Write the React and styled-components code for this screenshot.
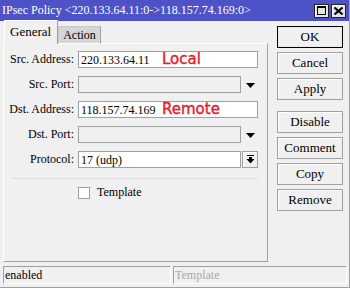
import styled, { createGlobalStyle } from "styled-components";

const GlobalStyle = createGlobalStyle`
	html, body {
		margin: 0;
		padding: 0;
		background: #f0f0f0;
	}
	* {
		box-sizing: border-box;
	}
`;

const rows = [
	{ label: "Src. Address:", value: "220.133.64.11", note: "Local", kind: "text" },
	{ label: "Src. Port:", kind: "drop" },
	{ label: "Dst. Address:", value: "118.157.74.169", note: "Remote", kind: "text" },
	{ label: "Dst. Port:", kind: "drop" },
	{ label: "Protocol:", value: "17 (udp)", kind: "select" },
];

const buttons = ["OK", "Cancel", "Apply", "Disable", "Comment", "Copy", "Remove"];

const App = () => {
	return (
		<>
			<GlobalStyle />
			<Window>
				<TitleBar>
					<Title>IPsec Policy &lt;220.133.64.11:0-&gt;118.157.74.169:0&gt;</Title>
					<TitleButtons>
						<TitleButton>
							<svg width="9" height="9" viewBox="0 0 9 9">
								<rect x="0.5" y="0.5" width="8" height="8" fill="none" stroke="#000" />
								<rect x="0" y="0" width="9" height="2" fill="#000" />
							</svg>
						</TitleButton>
						<TitleButton>
							<svg width="9" height="8" viewBox="0 0 9 8">
								<path d="M0.5 0.5 L8.5 7.5 M8.5 0.5 L0.5 7.5" stroke="#000" strokeWidth="2" />
							</svg>
						</TitleButton>
					</TitleButtons>
				</TitleBar>

				<Body>
					<Main>
						<Tabs>
							<Tab $active>General</Tab>
							<Tab>Action</Tab>
						</Tabs>
						<Panel>
							<Form>
								{rows.map((row) => (
									<Row key={row.label}>
										<Label>{row.label}</Label>
										<FieldWrap>
											<Field $disabled={row.kind === "drop"} $short={row.kind !== "text"}>
												{row.value}
												{row.note && <Note>{row.note}</Note>}
											</Field>
											{row.kind === "drop" && (
												<DropArrow>
													<svg width="9" height="5" viewBox="0 0 9 5">
														<path d="M0 0 H9 L4.5 5 Z" fill="#000" />
													</svg>
												</DropArrow>
											)}
											{row.kind === "select" && (
												<SelectButton>
													<svg width="9" height="9" viewBox="0 0 9 9">
														<rect x="1" y="0" width="7" height="1" fill="#000" />
														<rect x="3" y="2" width="3" height="3" fill="#000" />
														<path d="M0.5 4 H8.5 L4.5 8.5 Z" fill="#000" />
													</svg>
												</SelectButton>
											)}
										</FieldWrap>
									</Row>
								))}
							</Form>
							<Separator />
							<CheckRow>
								<Checkbox />
								<span>Template</span>
							</CheckRow>
						</Panel>
					</Main>

					<ButtonColumn>
						{buttons.map((b, i) => (
							<Button key={b} $primary={i === 0} $spaced={i === 3}>
								{b}
							</Button>
						))}
					</ButtonColumn>
				</Body>

				<StatusBar>
					<StatusCell $width={168}>enabled</StatusCell>
					<StatusCell $muted>Template</StatusCell>
				</StatusBar>
			</Window>
		</>
	);
};

const Window = styled.div`
	width: 350px;
	height: 288px;
	display: flex;
	flex-direction: column;
	background: #f0f0f0;
	border-right: 1px solid #a0a0a0;
	border-bottom: 1px solid #a0a0a0;
	font-family: "Liberation Serif", "Times New Roman", serif;
	font-size: 12px;
	color: #000;
`;

const TitleBar = styled.div`
	height: 21px;
	display: flex;
	align-items: center;
	justify-content: space-between;
	background: #4d52c6;
	padding: 0 3px 0 2px;
`;

const Title = styled.div`
	color: #fff;
	font-size: 12px;
	white-space: nowrap;
`;

const TitleButtons = styled.div`
	display: flex;
	gap: 2px;
`;

const TitleButton = styled.div`
	width: 15px;
	height: 14px;
	display: flex;
	align-items: center;
	justify-content: center;
	background: #e4e4e4;
	border: 1px solid #222;
	box-shadow: inset 1px 1px 0 #fff;
`;

const Body = styled.div`
	flex: 1;
	display: flex;
	padding: 0 6px 0 3px;
	gap: 9px;
`;

const Main = styled.div`
	width: 265px;
	display: flex;
	flex-direction: column;
`;

const Tabs = styled.div`
	display: flex;
	align-items: flex-end;
	height: 23px;
	padding-left: 1px;
	margin-bottom: -1px;
	position: relative;
	z-index: 1;
`;

const Tab = styled.div`
	height: ${(p) => (p.$active ? "24px" : "18px")};
	padding: ${(p) => (p.$active ? "3px 6px 0 5px" : "1px 4px 0 4px")};
	background: ${(p) => (p.$active ? "#f0f0f0" : "#d6d6d6")};
	border-top: 1px solid ${(p) => (p.$active ? "#fff" : "#c8c8c8")};
	border-left: 1px solid ${(p) => (p.$active ? "#fff" : "#c8c8c8")};
	border-right: 1px solid #a0a0a0;
	border-bottom: ${(p) => (p.$active ? "none" : "1px solid #fff")};
	font-size: ${(p) => (p.$active ? "13px" : "12px")};
`;

const Panel = styled.div`
	height: 219px;
	border-top: 1px solid #fff;
	border-left: 1px solid #fff;
	border-right: 1px solid #a0a0a0;
	border-bottom: 1px solid #a0a0a0;
	padding: 7px 0 0 0;
`;

const Form = styled.div`
	display: flex;
	flex-direction: column;
	gap: 8px;
`;

const Row = styled.div`
	display: grid;
	grid-template-columns: 70px 1fr;
	column-gap: 4px;
	align-items: center;
	height: 17px;
`;

const Label = styled.div`
	text-align: right;
	white-space: nowrap;
`;

const FieldWrap = styled.div`
	display: flex;
	align-items: center;
	width: 180px;
	gap: 1px;
`;

const Field = styled.div`
	position: relative;
	height: 17px;
	width: ${(p) => (p.$short ? "163px" : "180px")};
	border: 1px solid #a0a0a0;
	background: ${(p) => (p.$disabled ? "#f0f0f0" : "#fff")};
	padding: 1px 2px 0;
	font-size: 12px;
	line-height: 14px;
	white-space: nowrap;
`;

const Note = styled.span`
	position: absolute;
	left: 83px;
	top: -1px;
	font-family: "DejaVu Sans", Verdana, sans-serif;
	font-size: 15px;
	line-height: 16px;
	color: #e8202a;
	-webkit-text-stroke: 0.4px #e8202a;
`;

const DropArrow = styled.div`
	width: 16px;
	display: flex;
	justify-content: center;
	padding-top: 1px;
`;

const SelectButton = styled.div`
	width: 16px;
	height: 17px;
	display: flex;
	align-items: center;
	justify-content: center;
	border: 1px solid #a0a0a0;
	background: #f0f0f0;
	box-shadow: inset 1px 1px 0 #fff;
`;

const Separator = styled.div`
	margin: 10px 9px 0 8px;
	border-top: 1px solid #dcdcdc;
`;

const CheckRow = styled.div`
	display: flex;
	align-items: center;
	gap: 7px;
	margin: 6px 0 0 74px;
`;

const Checkbox = styled.div`
	width: 12px;
	height: 12px;
	background: #fff;
	border: 1px solid #a0a0a0;
`;

const ButtonColumn = styled.div`
	width: 66px;
	display: flex;
	flex-direction: column;
	gap: 4px;
	padding-top: 5px;
`;

const Button = styled.div`
	height: 22px;
	display: flex;
	align-items: center;
	justify-content: center;
	background: #f0f0f0;
	border: 1px solid ${(p) => (p.$primary ? "#000" : "#a0a0a0")};
	box-shadow: ${(p) => (p.$primary ? "inset 0 0 0 1px #e8e8e8" : "inset 1px 1px 0 #fff")};
	margin-top: ${(p) => (p.$spaced ? "7px" : "0")};
	font-size: 13px;
`;

const StatusBar = styled.div`
	display: flex;
	gap: 2px;
	padding: 3px 2px 3px 3px;
`;

const StatusCell = styled.div`
	height: 18px;
	flex: ${(p) => (p.$width ? `0 0 ${p.$width}px` : "1")};
	border-top: 1px solid #a0a0a0;
	border-left: 1px solid #a0a0a0;
	border-bottom: 1px solid #fff;
	border-right: 1px solid #fff;
	padding: 1px 1px 0;
	line-height: 15px;
	color: ${(p) => (p.$muted ? "#a8a8a8" : "#000")};
`;

export default App;
